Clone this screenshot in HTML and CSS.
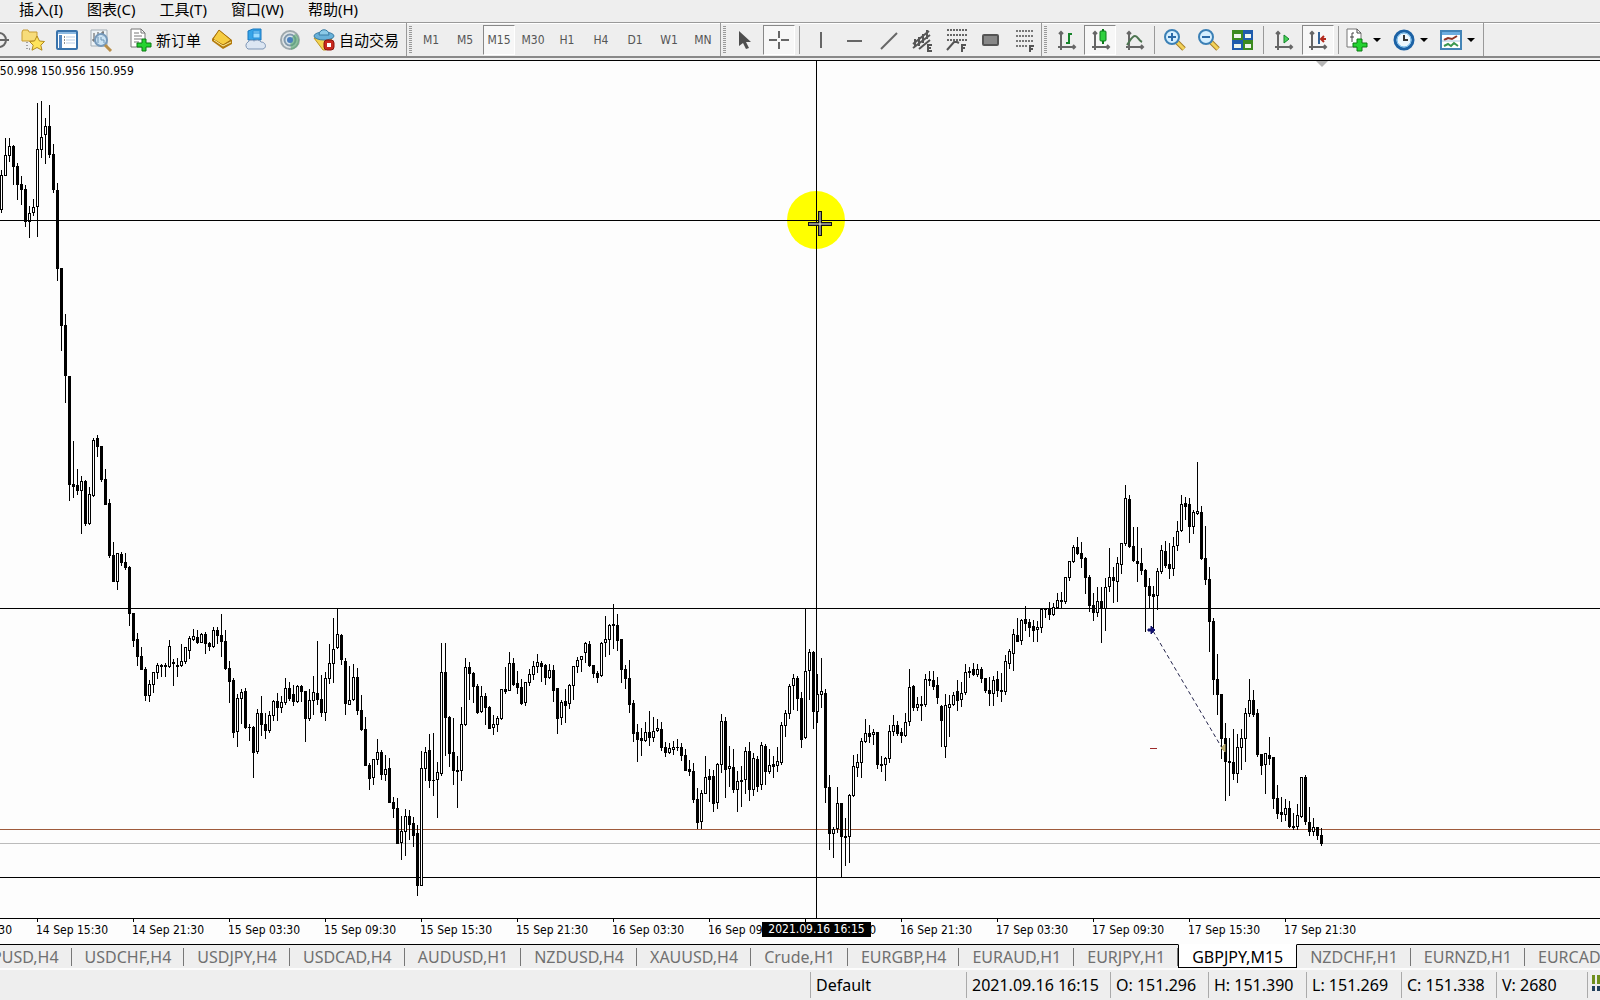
FILE: index.html
```html
<!DOCTYPE html>
<html lang="zh-CN">
<head>
<meta charset="utf-8">
<title>GBPJPY,M15</title>
<link rel="stylesheet" href="styles.css">
</head>
<body>
<div class="terminal">
<nav class="menubar">
  <button class="menu">插入(I)</button>
  <button class="menu">图表(C)</button>
  <button class="menu">工具(T)</button>
  <button class="menu">窗口(W)</button>
  <button class="menu">帮助(H)</button>
</nav>

<div class="toolbars">
  <div class="bar bar-main">
    <button class="tool" aria-label="Navigator"><svg width="24" height="24"><g fill="none" stroke="#666" stroke-width="2"><circle cx="12" cy="12" r="7"/><path d="M2 12h20M12 2v20"/></g></svg></button>
    <button class="tool" aria-label="Favorites"><svg width="24" height="24"><path d="M1 4l1-2h5l1 2h8v9H1z" fill="#f7dc7a" stroke="#c79b32"/><path d="M6 14v7M8 21h3" stroke="#555" stroke-dasharray="1 2"/><path d="M16 8l2.500 5 5 .5-3.700 3.700 1.200 5-5-2.700-5 2.700 1.200-5L8.500 13.500l5-.5z" fill="#ffe45c" stroke="#b38a1c"/></svg></button>
    <button class="tool" aria-label="Market watch"><svg width="24" height="24"><rect x="2" y="3" width="20" height="18" rx="1" fill="#fff" stroke="#3973ac" stroke-width="2"/><path d="M3 4h18v2H3z" fill="#8cb9e2"/><path d="M4 7h3v13H4z" fill="#5287c0"/><path d="M9 9h1M9 12h1M9 15h1" stroke="#222"/><path d="M11 9h9M11 12h9M11 15h9" stroke="#b9cde6"/></svg></button>
    <button class="tool" aria-label="Strategy tester"><svg width="24" height="24"><path d="M2 2h16v16H2z" fill="#eef3f6" stroke="#a3adb5"/><path d="M5 5v9M3 12h3M9 4v6M14 3v6M12 5h3" stroke="#555"/><circle cx="12" cy="12" r="6" fill="#c5e1f5" fill-opacity=".85" stroke="#7699ba" stroke-width="2"/><path d="M9 9v6M12 9v3M12 12h3v3" fill="none" stroke="#6f95b5"/><path d="M16 17l6 6" stroke="#b98e48" stroke-width="3"/></svg></button>
    <span class="sep"></span>
    <button class="tool labeled"><svg width="24" height="24"><path d="M2 1h10l4 4v14H2z" fill="#fff" stroke="#777"/><path d="M12 1v4h4M5 5h5M5 8h8M5 11h8M5 14h5" fill="none" stroke="#777"/><path d="M13 11h4v4h5v4h-5v4h-4v-4H8v-4h5z" fill="#24d330" stroke="#0a7b12"/></svg>新订单</button>
    <button class="tool" aria-label="MetaEditor"><svg width="24" height="24"><path d="M9 2l13 10v4l-9 5-11-8v-2z" fill="#b47c0e"/><path d="M9 2l12 10-8 5L3 11z" fill="#f6cd42" stroke="#a66f0b"/><path d="M4 12l9 6 8-4" fill="none" stroke="#fff0a0"/></svg></button>
    <button class="tool" aria-label="VPS"><svg width="24" height="24"><path d="M4 3l5-2h8v11H4z" fill="#35a4e8" stroke="#1976be"/><path d="M9 3h7v7H9zM9 5h7" fill="#9bdcff" stroke="#2b8fd8"/><path d="M4 21a4 4 0 0 1 0-7 4 4 0 0 1 6-1 5 5 0 0 1 7 1c5 0 6 6 2 7z" fill="#dce6f2" stroke="#7d95b5"/></svg></button>
    <button class="tool" aria-label="Signals"><svg width="24" height="24"><circle cx="12" cy="12" r="9" fill="#e1e6e8" stroke="#9da8ad" stroke-width="2"/><circle cx="12" cy="12" r="5.500" fill="#d4e3ec" stroke="#8299ac" stroke-width="2"/><path d="M12 12l1 10a10 10 0 0 0 8-8c0-5-2-8-4-8z" fill="#57a86c" fill-opacity=".6"/><circle cx="12" cy="12" r="3" fill="#4b7fbd"/></svg></button>
    <button class="tool labeled"><svg width="24" height="24"><path d="M2 10h18l-6 12h-3z" fill="#f3d451" stroke="#bd9622"/><ellipse cx="12" cy="8" rx="10" ry="4" fill="#68b1d9" stroke="#397ca5"/><path d="M7 7c0-7 10-7 10 0z" fill="#8bcae8" stroke="#397ca5"/><rect x="12" y="12" width="10" height="10" rx="3" fill="#c9281e" stroke="#8c150f"/><path d="M15 15h4v4h-4z" fill="#fff"/></svg>自动交易</button>
  </div>

  <div class="bar">
    <span class="grip"></span>
    <button class="tool period">M1</button><button class="tool period">M5</button><button class="tool period active">M15</button><button class="tool period">M30</button><button class="tool period">H1</button><button class="tool period">H4</button><button class="tool period">D1</button><button class="tool period">W1</button><button class="tool period">MN</button>
  </div>

  <div class="bar">
    <span class="grip"></span>
    <button class="tool" aria-label="Cursor"><svg width="24" height="24"><path d="M6 3v15l4-3 3 6 3-1-3-6h5z" fill="#4d4d4d"/></svg></button>
    <button class="tool active" aria-label="Crosshair"><svg width="24" height="24"><path d="M12 3v7M12 14v7M2 12h8M14 12h8" stroke="#666" stroke-width="2"/></svg></button>
    <span class="sep"></span>
    <button class="tool" aria-label="Vertical line"><svg width="24" height="24"><path d="M13 4v16" stroke="#666" stroke-width="2"/></svg></button>
    <button class="tool" aria-label="Horizontal line"><svg width="24" height="24"><path d="M5 13h15" stroke="#666" stroke-width="2"/></svg></button>
    <button class="tool" aria-label="Trendline"><svg width="24" height="24"><path d="M5 21L21 5" stroke="#666" stroke-width="2"/></svg></button>
    <button class="tool" aria-label="Equidistant channel"><svg width="24" height="24"><path d="M3 16L19 3M3 20L20 7M9 21L20 12M5 11v8M9 9v9M13 6v9M17 2v9" stroke="#555" stroke-width="2"/><path d="M22 17h-4v6h4M18 20h3" fill="none" stroke="#555" stroke-width="2"/></svg></button>
    <button class="tool" aria-label="Fibonacci retracement"><svg width="24" height="24"><path d="M3 2h20M3 7h20M3 12h20" stroke="#666" stroke-width="2" stroke-dasharray="2 1"/><path d="M3 22l7-8h3l2 1M22 17h-4v7M18 20h3" fill="none" stroke="#555" stroke-width="2"/></svg></button>
    <button class="tool" aria-label="Rectangle"><svg width="24" height="24"><rect x="5" y="7" width="15" height="10" rx="1" fill="#888" stroke="#555" stroke-width="2"/></svg></button>
    <button class="tool" aria-label="Text"><svg width="24" height="24"><path d="M4 3h17M4 8h17M4 13h17M4 18h11" stroke="#777" stroke-width="2" stroke-dasharray="2 1"/><path d="M22 18h-4v6M18 21h3" fill="none" stroke="#555" stroke-width="2"/></svg></button>
  </div>

  <div class="bar">
    <span class="grip"></span>
    <button class="tool" aria-label="Bar chart"><svg width="24" height="24"><path d="M7 5v17M4 19h17M5 6l2-2 2 2M19 17l2 2-2 2" fill="none" stroke="#666" stroke-width="2"/><path d="M15 5v11M12 15h3M15 6h3" stroke="#16842b" stroke-width="2"/></svg></button>
    <button class="tool active" aria-label="Candlesticks"><svg width="24" height="24"><path d="M7 5v17M4 19h17M5 6l2-2 2 2M19 17l2 2-2 2" fill="none" stroke="#666" stroke-width="2"/><path d="M15 1v15" stroke="#0b7a1a" stroke-width="2"/><rect x="12" y="3" width="6" height="10" rx="1" fill="#2fd03f" stroke="#0b7a1a"/></svg></button>
    <button class="tool" aria-label="Line chart"><svg width="24" height="24"><path d="M7 5v17M4 19h17M5 6l2-2 2 2M19 17l2 2-2 2" fill="none" stroke="#666" stroke-width="2"/><path d="M5 17c3-4 5-9 8-9s3 4 7 6" fill="none" stroke="#4c7450" stroke-width="2"/></svg></button>
    <span class="sep"></span>
    <button class="tool" aria-label="Zoom in"><svg width="24" height="24"><path d="M14 14l7 7" stroke="#a67e26" stroke-width="5"/><path d="M14 14l7 7" stroke="#f3d25a" stroke-width="3"/><circle cx="9" cy="9" r="7" fill="#d5efff" stroke="#3b80b6" stroke-width="2"/><path d="M5 9h8M9 5v8" stroke="#2a6aa8" stroke-width="2"/></svg></button>
    <button class="tool" aria-label="Zoom out"><svg width="24" height="24"><path d="M14 14l7 7" stroke="#a67e26" stroke-width="5"/><path d="M14 14l7 7" stroke="#f3d25a" stroke-width="3"/><circle cx="9" cy="9" r="7" fill="#d5efff" stroke="#3b80b6" stroke-width="2"/><path d="M5 9h8" stroke="#2a6aa8" stroke-width="2"/></svg></button>
    <button class="tool" aria-label="Tile windows"><svg width="24" height="24"><path d="M1 2h11v10H1zM12 12h10v10H12z" fill="#3c8b20"/><path d="M12 2h10v10H12zM1 12h11v10H1z" fill="#1f5cac"/><path d="M3 6h7v4H3zM14 6h6v4h-6zM3 16h7v4H3zM14 16h6v4h-6z" fill="#eef7ee"/></svg></button>
    <span class="sep"></span>
    <button class="tool" aria-label="Auto scroll"><svg width="24" height="24"><path d="M6 5v17M3 19h17M4 6l2-2 2 2M18 17l2 2-2 2" fill="none" stroke="#666" stroke-width="2"/><path d="M12 7v8l5-4z" fill="#48d457" stroke="#12832a"/></svg></button>
    <button class="tool active" aria-label="Chart shift"><svg width="24" height="24"><path d="M6 5v17M3 19h17M4 6l2-2 2 2M18 17l2 2-2 2" fill="none" stroke="#666" stroke-width="2"/><path d="M13 4v12" stroke="#356498" stroke-width="2"/><path d="M20 11h-5M18 8l-3 3 3 3" fill="none" stroke="#b3291c" stroke-width="2"/></svg></button>
    <span class="sep"></span>
    <button class="tool drop" aria-label="Indicators"><svg width="24" height="24"><path d="M2 1h10l4 4v14H2z" fill="#fff" stroke="#777"/><path d="M12 1v4h4M9 5H7v9M5 9h4" fill="none" stroke="#444"/><path d="M12 11h5v4h5v4h-5v4h-5v-4H8v-4h4z" fill="#24d330" stroke="#0a7b12"/></svg><i class="caret"></i></button>
    <button class="tool drop" aria-label="Periods"><svg width="24" height="24"><circle cx="12" cy="12" r="9" fill="#edf6fc" stroke="#1c62a5" stroke-width="3"/><circle cx="12" cy="12" r="7" fill="none" stroke="#65b2e7"/><path d="M12 7v5h4" fill="none" stroke="#333" stroke-width="2"/></svg><i class="caret"></i></button>
    <button class="tool drop" aria-label="Templates"><svg width="24" height="24"><rect x="2" y="3" width="20" height="18" fill="#fff" stroke="#4384b7" stroke-width="2"/><path d="M3 4h18v3H3z" fill="#6dade0"/><path d="M5 12l4-2 4 1 5-3" fill="none" stroke="#8c3325" stroke-width="2"/><path d="M3 13h18" stroke="#a8c8df"/><path d="M5 18l4-2 3 2 3-3 4 3" fill="none" stroke="#3a9850" stroke-width="2"/></svg><i class="caret"></i></button>
  </div>
</div>

<main class="chart">
  <svg id="plot" class="plot" role="img" aria-label="GBPJPY M15 candlestick chart"></svg>
  <p class="ohlc">150.998 150.956 150.959</p>
</main>

<div class="timeline">
  <span>14 Sep 09:30</span><span>14 Sep 15:30</span><span>14 Sep 21:30</span><span>15 Sep 03:30</span><span>15 Sep 09:30</span><span>15 Sep 15:30</span><span>15 Sep 21:30</span><span>16 Sep 03:30</span><span>16 Sep 09:30</span><span>16 Sep 15:30</span><span>16 Sep 21:30</span><span>17 Sep 03:30</span><span>17 Sep 09:30</span><span>17 Sep 15:30</span><span>17 Sep 21:30</span>
  <output class="cursor-time">2021.09.16 16:15</output>
</div>

<nav class="tabs">
  <button>GBPUSD,H4</button><button>USDCHF,H4</button><button>USDJPY,H4</button><button>USDCAD,H4</button><button>AUDUSD,H1</button><button>NZDUSD,H4</button><button>XAUUSD,H4</button><button>Crude,H1</button><button>EURGBP,H4</button><button>EURAUD,H1</button><button>EURJPY,H1</button><button class="current">GBPJPY,M15</button><button>NZDCHF,H1</button><button>EURNZD,H1</button><button>EURCAD,H1</button>
</nav>

<footer class="status">
  <span class="cell hint"></span>
  <span class="cell profile">Default</span>
  <span class="cell time">2021.09.16 16:15</span>
  <span class="cell price">O: 151.296</span>
  <span class="cell price">H: 151.390</span>
  <span class="cell low">L: 151.269</span>
  <span class="cell low">C: 151.338</span>
  <span class="cell volume">V: 2680</span>
  <svg class="link" width="8" height="16"><path d="M0 0h3v9H0zM5 0h3v9H5z" fill="#6f8f1d"/><path d="M0 11h3v5H0zM5 11h3v5H5z" fill="#22405c"/></svg>
</footer>
</div>
<script src="chart.js"></script>
</body>
</html>
```
FILE: styles.css
```css
* { box-sizing: border-box; }

body {
  margin: 0;
  background: #eee;
  color: #000;
  font-family: "Noto Sans", "Noto Sans CJK SC", sans-serif;
}

button {
  margin: 0;
  padding: 0;
  border: 0;
  background: none;
  color: inherit;
  font: inherit;
  white-space: nowrap;
}

.terminal {
  display: flex;
  flex-direction: column;
  min-height: 100vh;
  overflow: hidden;
}

.menubar {
  display: flex;
  gap: 24px;
  height: 22px;
  padding-left: 19px;
  font-size: 15px;
  line-height: 18px;
}

.menu { height: 18px; }

.toolbars {
  display: flex;
  height: 36px;
  border-top: 1px solid #999;
  border-bottom: 2px solid #888;
  box-shadow: inset 0 1px #fff;
  overflow: hidden;
}

.bar {
  display: flex;
  flex: none;
  align-items: center;
  border-right: 1px solid #999;
}

.bar-main {
  width: 407px;
  padding-right: 3px;
  justify-content: flex-end;
}

.grip {
  width: 3px;
  height: 27px;
  margin: 0 2px;
  background: repeating-linear-gradient(#999 0 1px, #eee 1px 2px);
}

.sep {
  width: 1px;
  height: 28px;
  margin: 0 3px;
  background: #999;
}

.tool {
  display: flex;
  flex: none;
  align-items: center;
  justify-content: center;
  width: 34px;
  height: 30px;
}

.tool.labeled {
  width: auto;
  padding: 0 4px 0 5px;
  gap: 3px;
  font-size: 15px;
}

.tool.period {
  color: #555;
  font-family: "DejaVu Sans Condensed", "DejaVu Sans", sans-serif;
  font-size: 12px;
}

.tool.active {
  width: 32px;
  margin: 0 1px;
  border: 1px solid #fff;
  border-top-color: #888;
  border-left-color: #888;
  background: #f7f7f7;
}

.tool.drop {
  width: 47px;
  padding-left: 3px;
  justify-content: flex-start;
  gap: 4px;
}

.caret {
  border: 4px solid transparent;
  border-top-color: #000;
  border-bottom: 0;
}

.chart {
  position: relative;
  display: flex;
  flex: 1;
  min-height: 600px;
  margin-top: 2px;
  border-top: 1px solid #000;
  background: #fdfdfd;
}

.plot {
  width: 100%;
  height: auto;
}

.ohlc {
  position: absolute;
  top: 2px;
  left: -7px;
  margin: 0;
  font-family: "DejaVu Sans Condensed", "DejaVu Sans", sans-serif;
  font-size: 12px;
  line-height: 16px;
}

.timeline {
  position: relative;
  display: flex;
  height: 26px;
  padding-top: 4px;
  border-top: 1px solid #000;
  background: #fdfdfd;
  font-family: "DejaVu Sans Condensed", "DejaVu Sans", sans-serif;
  font-size: 12px;
  line-height: 15px;
}

.timeline span {
  flex: none;
  width: 96px;
  white-space: nowrap;
}

.timeline span:first-child { margin-left: -60px; }

.timeline span::before {
  content: "";
  display: block;
  width: 1px;
  height: 3px;
  margin: -4px 0 1px 1px;
  background: #000;
}

.cursor-time {
  position: absolute;
  top: 3px;
  left: 762px;
  width: 109px;
  background: #000;
  color: #fff;
  text-align: center;
}

.tabs {
  display: flex;
  height: 26px;
  border-bottom: 2px solid #fcfcfc;
  color: #707070;
  font-size: 16px;
  line-height: 24px;
}

.tabs button {
  position: relative;
  flex: none;
  height: 24px;
  padding: 0 13px;
  border-top: 1px solid #000;
}

.tabs button:first-child { margin-left: -43px; }

.tabs button::after {
  content: "";
  position: absolute;
  top: 3px;
  right: 0;
  width: 1px;
  height: 18px;
  background: #777;
}

.tabs .current {
  border: 1px solid #000;
  border-top-color: #fff;
  background: #fff;
  color: #000;
}

.tabs .current::after { display: none; }

.status {
  display: flex;
  height: 30px;
  padding-top: 2px;
  font-size: 16px;
  line-height: 26px;
}

.cell {
  flex: none;
  height: 26px;
  padding-left: 5px;
  border-left: 1px solid #aaa;
  white-space: nowrap;
}

.hint { flex: 1; border-left: 0; }
.profile { width: 156px; }
.time { width: 144px; }
.price { width: 98px; }
.low { width: 95px; }
.volume { width: 92px; border-right: 1px solid #aaa; }
.link { margin: 3px 0 0 4px; }
```
FILE: chart.js
```js
// Each bar is "high,top,bottom,low"; a trailing "f" marks a falling (filled) bar.
// A session gives the screen height of its zero level and its units per pixel.
const sessions = [
  { base: 29, unit: 2.45, bars: `198,209,293,300 118,160,209,209 118,138,160,175 136,138,187,232f 180,187,232,268f 211,231,244,281f 234,244,322,335f 285,302,322,362 269,288,300,308 32,146,286,359 29,116,146,166 69,89,109,180 38,89,158,166f 133,158,244,251f 228,246,438,467f 437,437,577,638f 551,577,700,766f 702,702,967,1006f 860,966,972,999f 929,969,981,990f 947,959,981,1087 956,959,1062,1067f 974,990,1062,1065 853,858,994,996 846,853,874,898f 873,873,954,960f 929,954,1016,1016f 1003,1012,1141,1146f 1109,1140,1204,1204f 1135,1135,1204,1224 1132,1138,1158,1164f 1135,1157,1170,1175f 1167,1170,1283,1312f` },
  { base: 529, unit: 3, bars: `69,69,150,170f 129,148,200,227f 171,198,239,239f 232,238,315,332f 270,283,315,335 247,247,284,308 219,226,247,266 222,226,230,260f 219,226,230,258f 150,168,228,233 207,216,221,287f 205,226,230,260f 162,213,227,228 172,172,215,221 138,145,182,206 117,139,149,150 120,141,156,161f 129,133,156,158 127,132,161,191f 157,159,168,182f 111,121,168,172 111,120,137,161f 72,135,155,200f 120,153,236,238f 213,234,275,338f 265,270,426,443f 313,325,424,470 297,307,325,401 294,303,413,416f 402,411,412,452f 409,411,486,563f 357,370,485,491 318,369,404,437f 369,402,420,446f 363,376,420,428 331,334,377,391 309,333,353,391f 318,337,353,367 264,295,338,344 276,294,325,332f 286,313,335,347f 286,289,335,338 286,288,305,335f 303,303,386,455f 297,331,386,392 258,307,331,374 153,309,329,344f 255,327,368,380f 247,265,368,392 162,220,266,281 84,178,220,278 57,133,173,176 132,135,209,224f 205,213,341,374f 228,331,343,344 224,262,328,332 235,262,360,374f 315,360,418,422f 381,417,527,527f 521,525,564,599f 508,508,563,584 447,487,509,524 481,486,553,567f 495,538,553,570 504,534,638,638f 621,636,656,683f 624,654,761,761f 678,724,758,809 657,679,724,797 660,678,704,749f 682,699,735,768f 705,729,887,917f 483,535,886,886 471,487,535,570 432,480,572,593f 429,570,571,617f 516,547,569,683 159,247,551,557 159,246,383,497f 378,381,491,530f 384,486,542,584f 498,541,545,653f 351,403,542,572 205,232,404,405 216,231,249,327f 247,249,288,338f 282,288,366,369f 288,319,364,366 310,318,353,402f 348,351,414,416f 375,403,413,434 379,385,404,425 298,298,386,389 231,297,303,311f 186,220,301,302 204,219,282,285f 243,279,293,311f 267,291,341,342f 277,277,338,347 237,253,278,287 213,229,253,269 192,217,230,248 213,219,228,275f 222,225,263,284f 224,241,263,266 225,240,302,335f 294,294,384,431f 330,337,383,404 297,333,347,398f 283,286,341,356 229,229,287,329 201,211,230,248 199,199,209,245 156,160,188,218 153,162,227,228f 225,225,251,263f 243,249,261,278f 157,160,257,258 78,148,158,200 102,106,149,194 42,102,105,174f 72,105,150,182f 147,147,239,278f 225,237,266,294f 210,264,342,366f 330,339,429,455f 402,426,449,515f 414,445,452,497f 396,427,452,453 363,426,443,467f 381,424,443,455 387,415,422,425 396,417,473,480f 456,471,486,500f 459,475,486,491 453,471,479,494 447,471,472,482f 459,471,497,512f 477,495,540,542f 510,538,545,555f 519,543,629,638f 594,627,696,714f 600,610,695,714 498,562,610,611 537,558,567,633f 540,558,639,665f 520,523,638,656 372,394,524,548 381,393,537,623f 468,529,535,590 477,531,597,606f 543,574,598,665 528,570,575,650f 472,484,569,609 456,483,597,632f 489,505,599,617 498,507,588,605f 457,466,584,599 462,468,545,584f 477,526,545,551 498,523,528,563f 471,514,526,545 396,406,518,524 361,370,407,440 283,289,371,384 252,265,287,357 258,264,326,360f 306,324,449,473f 57,244,442,446 177,187,241,327 184,186,365,416f 252,313,364,398 205,304,314,353 297,309,591,638f 555,591,731,779f 711,718,731,803 591,640,716,728 639,639,740,860f 684,738,743,827f 612,616,740,818 495,529,616,618 492,517,533,560 445,454,518,563 387,430,455,457 405,429,438,456f 417,427,433,464 426,426,524,536f 498,522,525,545f 501,505,523,570 405,424,506,518 375,406,424,437 393,405,429,437f 414,426,437,458f 369,397,437,440 237,292,395,406 285,288,353,360f 321,343,353,360 318,342,345,392f 252,268,344,350 243,267,272,285f 243,272,288,299f 261,285,323,341f 345,348,392,470f 312,346,470,503 315,343,353,440 306,316,344,345 270,303,332,360f 276,310,329,350 222,247,308,314 231,243,246,261f 219,237,252,257f 222,238,254,258 232,237,266,278f 264,264,300,308f 261,300,311,345f 258,271,311,345 243,267,300,318f 249,300,303,335f 195,214,305,314 177,184,221,234 117,133,191,242 84,135,153,155f 88,91,152,164 48,88,101,120f 87,97,111,140f 90,110,120,155f 93,112,118,155 57,57,113,126 54,56,59,83f 36,57,74,87f 39,52,72,75 9,31,53,55 6,31,35,55f` },
  { base: 389, unit: 3, bars: `381,382,455,461 334,334,382,392 286,292,334,338 261,291,309,312f 276,309,324,353f 321,324,383,429f 375,381,467,483f 429,465,488,510f 411,454,487,500 411,453,475,578f 384,412,474,540 294,382,410,425 351,381,392,458f 321,340,394,455 280,280,343,371 105,145,281,287 135,147,290,291f 231,289,332,335f 231,333,341,395f 294,339,360,374f 357,360,410,545f 384,408,437,473f 408,433,438,537f 354,364,437,479 285,301,364,371 273,303,347,353f 279,342,356,386f 261,289,355,377 213,244,287,302 135,163,241,245 141,159,168,209f 144,162,230,278f 180,187,230,251 36,184,191,194 168,186,324,329f 228,324,389,404f 351,387,515,605f 504,513,689,734f 612,687,734,794f 732,732,866,926f 819,864,935,1052f 864,933,938,1037f 837,936,971,989f 852,892,970,998 837,865,892,959 774,790,866,935 687,751,791,800 720,750,792,800f 777,789,914,920f 912,912,947,974f 910,910,944,1031 861,915,926,944f 921,921,1046,1076f 1005,1044,1091,1106f 1041,1088,1094,1115f 1047,1075,1094,1112 1053,1074,1130,1131f 1089,1128,1131,1139f 1062,1096,1130,1137 981,982,1100,1103 975,981,1115,1124f 1071,1116,1145,1157f 1104,1132,1144,1155 1131,1131,1157,1169f 1134,1155,1181,1185f` }
];

const plot = document.getElementById("plot");
const level = (y, color) => `<rect x="0" y="${y}" width="100%" height="1" fill="${color}"/>`;

// Price levels go under the bars.
let art = level(547, "#000") + level(768, "#9e5a3c") + level(782, "#bbb") + level(816, "#000");

let x = 1;
for (const { base, unit, bars } of sessions) {
  for (const bar of bars.split(" ")) {
    const [high, top, bottom, low] = bar.split(",").map(v => Math.floor(base + parseFloat(v) / unit));
    const height = bottom - top + 1;
    art += `<rect x="${x}" y="${high}" width="1" height="${low - high + 1}"/>`;
    art += `<rect x="${x - 1}" y="${top}" width="3" height="${height}"/>`;
    if (!bar.endsWith("f") && height > 2) {
      art += `<rect x="${x}" y="${top + 1}" width="1" height="${height - 2}" fill="#fff"/>`;
    }
    x += 4;
  }
}

// Closed trade, its stop level, and the chart shift mark.
art += `<path d="M1153 570L1222 687" stroke="#22224a" stroke-dasharray="4 3"/>
  <path d="M1148 568h3v-3l4 4-4 4v-3h-3z" fill="#12126e" stroke="#12126e"/>
  <path d="M1225 683v8l-4-4z" fill="#b9ab70" stroke="#b9ab70"/>
  <rect x="1150" y="687" width="7" height="1" fill="#9c2a2a"/>
  <path d="M1316 0h12l-6 6z" fill="#b5b5b5"/>`;

// Pointer with its highlight, and the crosshair through it.
art += `<circle cx="816" cy="159" r="29" fill="#ff0"/>
  ${level(159, "#000")}
  <rect x="816" y="0" width="1" height="100%"/>
  <path d="M820 150v25M808 163h24" stroke="#111" stroke-width="4"/>
  <path d="M820 151v23M809 163h22" stroke="#fff" stroke-width="1"/>`;

plot.innerHTML = art;
```
